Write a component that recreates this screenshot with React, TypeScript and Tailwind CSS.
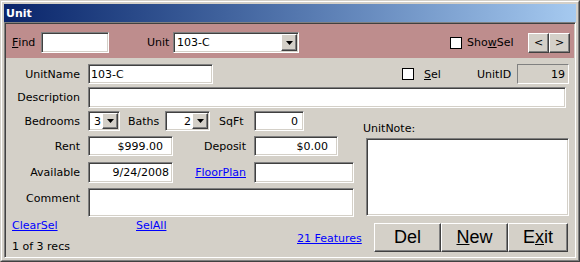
import React from 'react';

// classic 3D edges
const sunken =
  'border border-t-[#808080] border-l-[#808080] border-b-white border-r-white shadow-[inset_1px_1px_0_#404040,inset_-1px_-1px_0_#d4d0c8]';
const raised =
  'border border-t-white border-l-white border-b-[#404040] border-r-[#404040] shadow-[inset_-1px_-1px_0_#808080]';

type Kids = { className?: string; children?: React.ReactNode };

function Box({ className = '', children }: Kids) {
  return <div className={`${sunken} bg-white flex items-center shrink-0 overflow-hidden whitespace-nowrap ${className}`}>{children}</div>;
}

function Label({ className = '', children }: Kids) {
  return <span className={`w-[74px] shrink-0 text-right whitespace-nowrap ${className}`}>{children}</span>;
}

function Arrow() {
  return (
    <svg width="7" height="4" viewBox="0 0 7 4">
      <path d="M0 0h7L3.5 4z" fill="#000" />
    </svg>
  );
}

function Combo({ className = '', value, right }: { className?: string; value: string; right?: boolean }) {
  return (
    <div className={`${sunken} bg-white flex items-stretch p-[1px] shrink-0 ${className}`}>
      <span className={`flex-1 flex items-center whitespace-nowrap ${right ? 'justify-end pr-[1px]' : 'pl-[2px]'}`}>{value}</span>
      <span className={`${raised} bg-[#d4d0c8] w-[16px] flex items-center justify-center`}>
        <Arrow />
      </span>
    </div>
  );
}

function Check({ className = '' }: { className?: string }) {
  return <span className={`block w-[12px] h-[12px] shrink-0 bg-white border border-black ${className}`} />;
}

function Link({ className = '', children }: Kids) {
  return <span className={`text-[#0000ff] underline whitespace-nowrap ${className}`}>{children}</span>;
}

function Btn({ className = '', children }: Kids) {
  return (
    <button className={`${raised} bg-[#d4d0c8] h-[29px] flex items-center justify-center font-['Liberation_Sans',Arial,sans-serif] text-[18px] ${className}`}>
      {children}
    </button>
  );
}

export default function App() {
  return (
    <div className="w-[580px] h-[262px] bg-[#d4d0c8] border border-t-[#d4d0c8] border-l-[#d4d0c8] border-b-[#404040] border-r-[#404040] font-['DejaVu_Sans',sans-serif] text-[11px] leading-[13px] text-black select-none">
      <div className="h-full flex flex-col border border-t-white border-l-white border-b-[#808080] border-r-[#808080] p-[2px]">
        {/* title bar */}
        <div className="h-[18px] shrink-0 flex items-center pl-[2px] bg-linear-to-r from-[#0a246a] to-[#a6caf0] text-white font-bold">
          Unit
        </div>

        {/* client area */}
        <div className={`flex-1 flex flex-col p-[1px] ${sunken} bg-[#d4d0c8]`}>
          {/* search header */}
          <div className="h-[34px] shrink-0 bg-[#be8d8d] flex items-start pt-[8px] pl-[6px] pr-[4px]">
            <span className="w-[29px] h-[21px] flex items-center">
              <u>F</u>ind
            </span>
            <Box className="w-[68px] h-[21px]" />
            <span className="ml-[38px] w-[26px] h-[21px] flex items-center">Unit</span>
            <Combo className="w-[126px] h-[21px]" value="103-C" />
            <div className="ml-auto h-[21px] flex items-center">
              <Check />
              <span className="ml-[5px] w-[61px]">
                Sho<u>w</u>Sel
              </span>
              <button className={`${raised} bg-[#d4d0c8] w-[21px] h-[20px] flex items-center justify-center text-[11px]`}>&lt;</button>
              <button className={`${raised} bg-[#d4d0c8] w-[21px] h-[20px] flex items-center justify-center text-[11px]`}>&gt;</button>
            </div>
          </div>

          {/* form body */}
          <div className="flex-1 flex flex-col">
            <div className="mt-[6px] h-[20px] flex items-center">
              <Label>UnitName</Label>
              <Box className="ml-[8px] w-[125px] h-[20px] pl-[2px]">103-C</Box>
              <Check className="ml-[189px]" />
              <span className="ml-[10px] w-[53px]">
                <u>S</u>el
              </span>
              <span className="w-[40px]">UnitID</span>
              <div className="w-[52px] h-[20px] border border-t-[#808080] border-l-[#808080] border-b-white border-r-white bg-[#d4d0c8] flex items-center justify-end pr-[3px]">
                19
              </div>
            </div>

            <div className="mt-[3px] h-[21px] flex items-center">
              <Label>Description</Label>
              <Box className="ml-[8px] w-[478px] h-[21px]" />
            </div>

            <div className="mt-[3px] flex">
              <div className="w-[348px] flex flex-col">
                <div className="h-[20px] flex items-center">
                  <Label>Bedrooms</Label>
                  <Combo className="ml-[8px] w-[32px] h-[20px]" value="3" right />
                  <span className="ml-[8px] w-[37px]">Baths</span>
                  <Combo className="w-[45px] h-[20px]" value="2" right />
                  <span className="ml-[9px] w-[35px]">SqFt</span>
                  <Box className="w-[50px] h-[20px] justify-end pr-[5px]">0</Box>
                </div>
                <div className="mt-[5px] h-[20px] flex items-center">
                  <Label>Rent</Label>
                  <Box className="ml-[8px] w-[85px] h-[20px] justify-end pr-[9px]">$999.00</Box>
                  <span className="w-[73px] text-right">Deposit</span>
                  <Box className="ml-[8px] w-[84px] h-[20px] justify-end pr-[9px]">$0.00</Box>
                </div>
                <div className="mt-[6px] h-[21px] flex items-center">
                  <Label>Available</Label>
                  <Box className="ml-[8px] w-[85px] h-[21px] justify-end pr-[3px]">9/24/2008</Box>
                  <span className="w-[73px] text-right">
                    <Link>FloorPlan</Link>
                  </span>
                  <Box className="ml-[8px] w-[100px] h-[21px]" />
                </div>
                <div className="mt-[5px] h-[29px] flex items-start">
                  <Label className="pt-[4px]">Comment</Label>
                  <Box className="ml-[8px] w-[266px] h-[29px]" />
                </div>
              </div>

              <div className="ml-[9px] flex flex-col">
                <span className="mt-[11px]">UnitNote:</span>
                <Box className="ml-[3px] mt-[3px] w-[203px] h-[78px]" />
              </div>
            </div>

            {/* footer */}
            <div className="flex items-start">
              <div className="w-[291px] pl-[6px] flex flex-col">
                <div className="mt-[2px] flex">
                  <span className="w-[124px]">
                    <Link>ClearSel</Link>
                  </span>
                  <Link>SelAll</Link>
                </div>
                <span className="mt-[8px]">1 of 3 recs</span>
              </div>
              <span className="mt-[15px] w-[77px]">
                <Link>21 Features</Link>
              </span>
              <div className="mt-[6px] flex">
                <Btn className="w-[67px]">Del</Btn>
                <Btn className="w-[67px]">
                  <u>N</u>ew
                </Btn>
                <Btn className="w-[60px]">
                  E<u>x</u>it
                </Btn>
              </div>
            </div>
          </div>
        </div>
      </div>
    </div>
  );
}
